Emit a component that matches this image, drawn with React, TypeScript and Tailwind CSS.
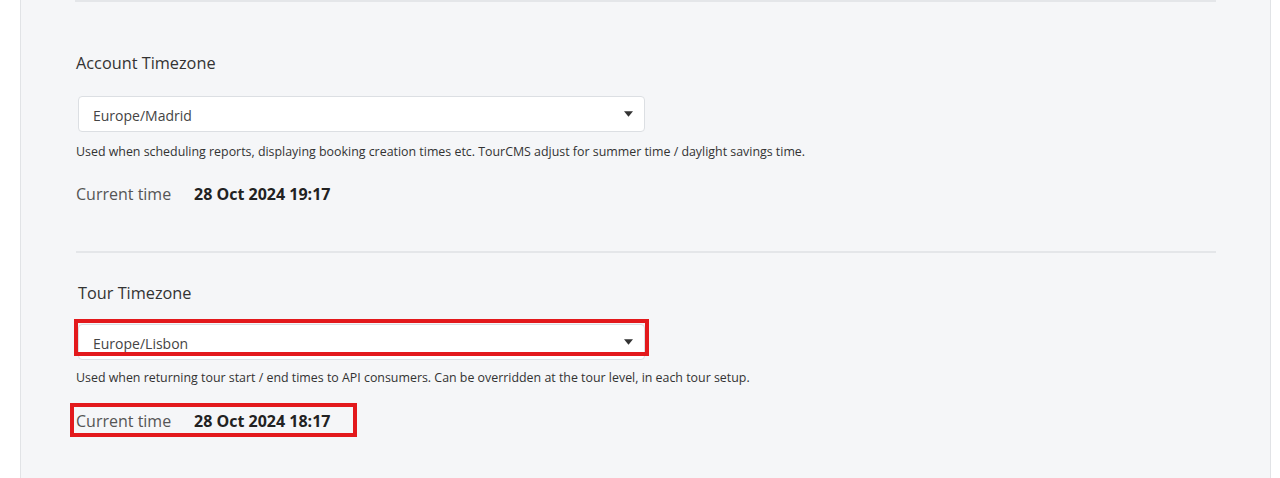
import { ReactNode } from 'react'

const font = { fontFamily: '"Open Sans", "Noto Sans", sans-serif' }

const Select = ({ value }: { value: string }) => (
  <div className="flex h-[36px] w-[567px] items-center justify-between rounded-[4px] border border-[#dcdfe3] bg-white pl-[14px] pr-[11px] pt-[2px] text-[14px] text-[#444]">
    <span>{value}</span>
    <svg width="9" height="6" viewBox="0 0 10 6" className="-mt-[2px] fill-[#333]">
      <path d="M0 0h10L5 6z" />
    </svg>
  </div>
)

const CurrentTime = ({ value }: { value: string }) => (
  <div className="flex items-baseline text-[16px]">
    <span className="w-[118px] text-[#555]">Current time</span>
    <span className="font-bold text-[#222]">{value}</span>
  </div>
)

const Highlight = ({ className }: { className: string }) => (
  <div className={`pointer-events-none absolute border-4 border-[#e3191c] ${className}`} />
)

const Section = ({ children }: { children: ReactNode }) => <div className="flex flex-col">{children}</div>

export default function App() {
  return (
    <div className="flex h-[478px] w-[1280px] bg-white" style={font}>
      <div className="ml-[20px] h-full w-[1251px] border-x border-[#e1e3e6] bg-[#f5f6f8]">
        <div className="relative mx-[54px] border-t-2 border-[#e4e6e9] pl-[1px]">
          <Section>
            <h3 className="mt-[49px] text-[16.3px] text-[#333]">Account Timezone</h3>
            <div className="mt-[21px] pl-[2px]">
              <Select value="Europe/Madrid" />
            </div>
            <p className="mt-[11px] text-[12.4px] text-[#333]">
              Used when scheduling reports, displaying booking creation times etc. TourCMS adjust for summer time / daylight savings time.
            </p>
            <div className="mt-[20px]">
              <CurrentTime value="28 Oct 2024 19:17" />
            </div>
          </Section>
          <div className="mt-[45px] border-t-2 border-[#e4e6e9]" />
          <Section>
            <h3 className="mt-[28px] pl-[2px] text-[16.3px] text-[#333]">Tour Timezone</h3>
            <div className="mt-[19px] pl-[2px]">
              <Select value="Europe/Lisbon" />
            </div>
            <p className="mt-[9px] text-[12.4px] text-[#333]">
              Used when returning tour start / end times to API consumers. Can be overridden at the tour level, in each tour setup.
            </p>
            <div className="mt-[21px]">
              <CurrentTime value="28 Oct 2024 18:17" />
            </div>
          </Section>
          <Highlight className="left-[-1px] top-[317px] h-[37px] w-[575px]" />
          <Highlight className="left-[-5px] top-[401px] h-[34px] w-[287px]" />
        </div>
      </div>
    </div>
  )
}
